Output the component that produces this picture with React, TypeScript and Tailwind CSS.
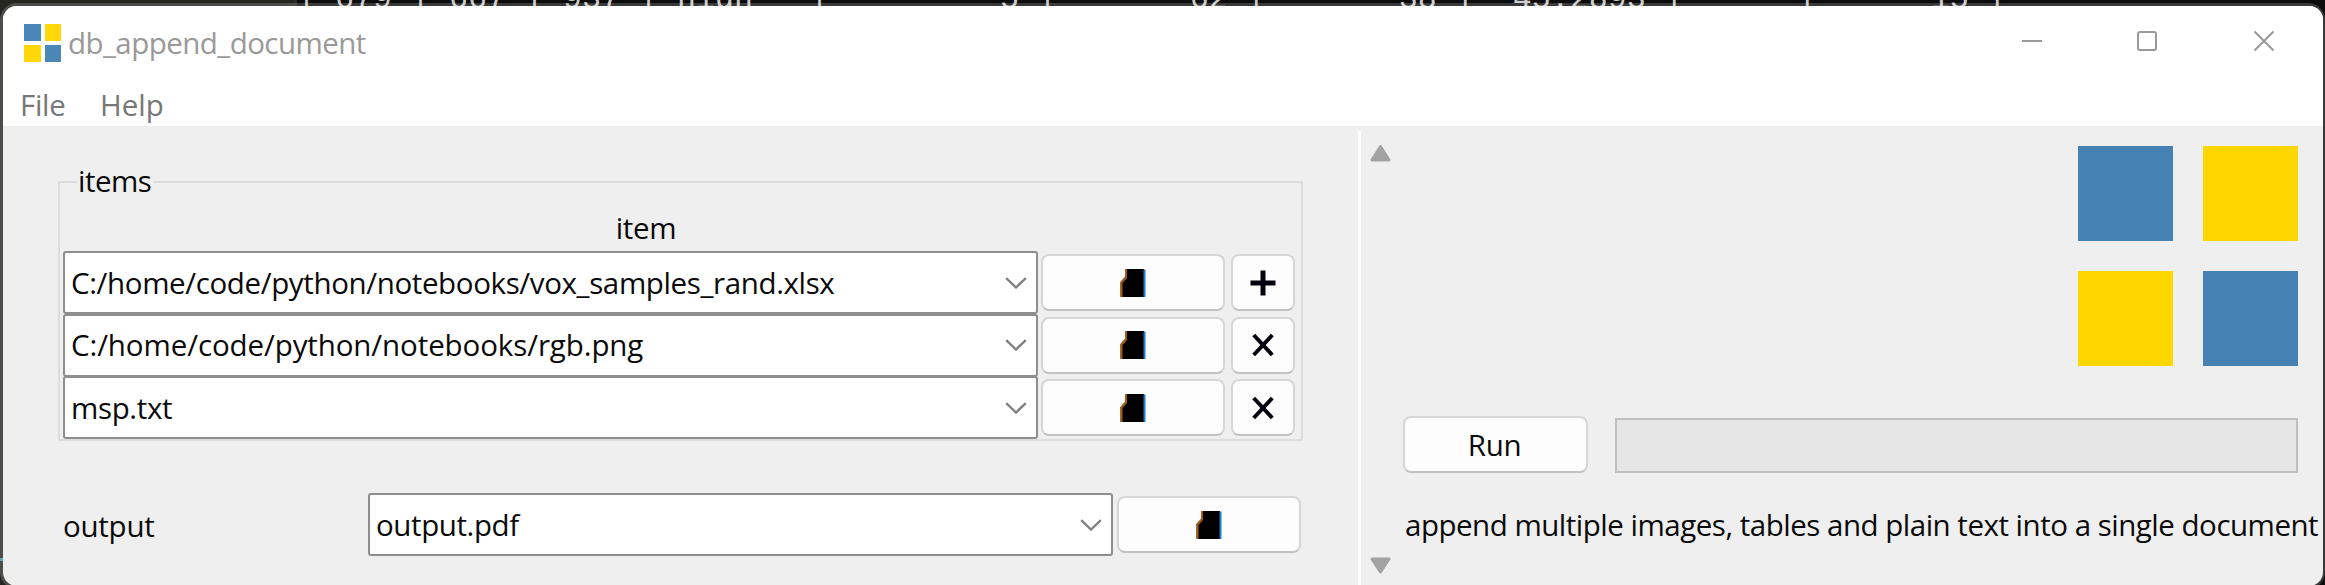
import type { ReactNode } from "react";

function FileIcon() {
  return (
    <svg width="26" height="28" viewBox="0 0 26 28" className="shrink-0">
      <path d="M5 0H24V28H0.500V13L5 8Z" fill="#000" />
      <path d="M5 0H7V9L2.500 14V28H0.500V13L5 8Z" fill="#a85a10" />
      <rect x="23.500" y="0.500" width="2" height="27.500" fill="#1a7fd0" />
    </svg>
  );
}

function Chevron() {
  return (
    <svg width="22" height="12" viewBox="0 0 22 12" className="shrink-0">
      <path d="M1.200 1.200L11 10.500L20.800 1.200" fill="none" stroke="#808080" strokeWidth="2.400" />
    </svg>
  );
}

function Plus() {
  return (
    <svg width="26" height="26" viewBox="0 0 26 26">
      <path d="M0.500 13H25.500M13 0.500V25.500" stroke="#05000c" strokeWidth="5" />
    </svg>
  );
}

function Cross() {
  return (
    <svg width="22" height="24" viewBox="0 0 22 24">
      <path d="M1.700 2L20.300 22M20.300 2L1.700 22" stroke="#05000c" strokeWidth="4" />
    </svg>
  );
}

function Combo({ value, className }: { value: string; className: string }) {
  return (
    <div
      className={
        "flex h-[63px] shrink-0 items-center justify-between rounded-[3px] border-2 border-[#8e8e8e] bg-white pr-[9px] pl-[6px] " +
        className
      }
    >
      <span>{value}</span>
      <Chevron />
    </div>
  );
}

function Button({ className, children }: { className: string; children: ReactNode }) {
  return (
    <div
      className={
        "flex h-[57px] shrink-0 items-center justify-center rounded-[8px] border-2 border-[#d6d6d6] border-b-[#c2c2c2] bg-[#fdfdfd] " +
        className
      }
    >
      {children}
    </div>
  );
}

const items = [
  { path: "C:/home/code/python/notebooks/vox_samples_rand.xlsx", tracking: "tracking-[-0.37px]", action: "add" },
  { path: "C:/home/code/python/notebooks/rgb.png", tracking: "tracking-[-0.1px]", action: "remove" },
  { path: "msp.txt", tracking: "tracking-[-0.35px]", action: "remove" },
];

export default function App() {
  return (
    <div className="relative h-[585px] w-[2325px] overflow-hidden bg-[#0c0c0c] font-['Open_Sans',sans-serif] text-[29.5px] leading-[40px] whitespace-nowrap text-[#0a0a0a]">
      {/* desktop behind the window */}
      <div className="absolute inset-0 flex">
        <div className="h-full w-[294px] bg-[#25261f]" />
        <div className="h-full w-[3px] bg-[#2b2b2b]" />
        <div className="h-[12px] overflow-hidden font-['Liberation_Mono',monospace] text-[31.67px] leading-[36px] text-[#cccccc]">
          <pre className="-mt-[18px] [font-family:inherit]">
            {"| 679 | 667 | 937 | high   |         5 |       62 |       38 |  45.2893 |      |      15 |"}
          </pre>
        </div>
      </div>

      {/* window frame */}
      <div className="absolute top-[3px] left-0 h-[586px] w-[2325px] rounded-[17px] bg-[#ffffff30] pt-[3px] pl-[3px]">
        <div className="flex h-[580px] w-[2320px] flex-col overflow-hidden rounded-[14px] bg-[#efefef]">
          <div className="flex h-[120px] shrink-0 flex-col bg-white">
            <div className="flex h-[72px] items-start">
              <div className="mt-[18px] ml-[21px] grid grid-cols-2 gap-x-[4px] gap-y-[4px]">
                <div className="h-[17px] w-[16.5px] bg-[#4a86b8]" />
                <div className="h-[17px] w-[16.5px] bg-[#ffd70a]" />
                <div className="h-[17px] w-[16.5px] bg-[#ffd70a]" />
                <div className="h-[17px] w-[16.5px] bg-[#4a86b8]" />
              </div>
              <div className="mt-[17px] ml-[7px] tracking-[-0.55px] text-[#999999]">db_append_document</div>
              <svg width="253" height="22" viewBox="0 0 253 22" className="mt-[24px] mr-[48px] ml-auto" fill="none" stroke="#999999" strokeWidth="2">
                <path d="M0 11H20" />
                <rect x="116" y="2" width="18" height="18" rx="2" />
                <path d="M232.500 1.500L251.500 20.500M251.500 1.500L232.500 20.500" />
              </svg>
            </div>
            <div className="flex pt-[7px] pl-[17px] text-[#777777]">
              <span className="w-[80px] tracking-[-0.3px]">File</span>
              <span>Help</span>
            </div>
          </div>

          <div className="flex min-h-0 flex-1">
            {/* form */}
            <div className="w-[1355px] shrink-0">
              <div className="mt-[55px] ml-[55px] h-[260px] w-[1245px] border-2 border-[#dcdcdc]">
                <div className="-mt-[22px] ml-[17px] h-[40px] w-[76px] bg-[#efefef] pl-px tracking-[-0.5px]">items</div>
                <div className="mt-[7px] ml-[2px] w-[1168px] text-center tracking-[-0.3px]">item</div>
                <div className="mt-[3px] ml-[3px] flex flex-col">
                  {items.map((item) => (
                    <div key={item.path} className="flex h-[62.5px] items-start">
                      <Combo value={item.path} className={"w-[975px] " + item.tracking} />
                      <Button className="mt-[3px] ml-[3px] w-[184px]">
                        <FileIcon />
                      </Button>
                      <Button className="mt-[3px] ml-[6px] w-[64px]">
                        {item.action === "add" ? <Plus /> : <Cross />}
                      </Button>
                    </div>
                  ))}
                </div>
              </div>
              <div className="mt-[52px] flex items-center pl-[60px]">
                <span className="w-[305px] pt-[2px] tracking-[-0.25px]">output</span>
                <Combo value="output.pdf" className="w-[745px] tracking-[-0.4px]" />
                <Button className="ml-[4px] w-[184px]">
                  <FileIcon />
                </Button>
              </div>
            </div>

            {/* scroll rail */}
            <div className="mt-[5px] flex w-[36px] shrink-0 flex-col items-center border-l-3 border-white">
              <svg width="21" height="17" viewBox="0 0 21 17" className="mt-[14px] ml-[5px]">
                <path d="M10.500 1.500L19 15H2Z" fill="#a3a3a3" stroke="#a3a3a3" strokeWidth="3" strokeLinejoin="round" />
              </svg>
              <svg width="21" height="17" viewBox="0 0 21 17" className="mt-auto mb-[12px] ml-[5px]">
                <path d="M10.500 15L19 2H2Z" fill="#a3a3a3" stroke="#a3a3a3" strokeWidth="3" strokeLinejoin="round" />
              </svg>
            </div>

            {/* run panel */}
            <div className="flex min-w-0 flex-1 flex-col pl-[9px]">
              <div className="mt-[20px] mr-[25px] grid grid-cols-[95px_95px] gap-[30px] self-end">
                <div className="h-[95px] bg-[#4682b4]" />
                <div className="h-[95px] bg-[#ffd700]" />
                <div className="h-[95px] bg-[#ffd700]" />
                <div className="h-[95px] bg-[#4682b4]" />
              </div>
              <div className="mt-[50px] flex">
                <Button className="w-[185px]">
                  <span className="pr-[2px] tracking-[-0.3px]">Run</span>
                </Button>
                <div className="mt-[2px] ml-[27px] h-[55px] w-[683px] border-2 border-[#bfbfbf] bg-[#e6e6e6]" />
              </div>
              <div className="mt-[32px] pl-[2px] tracking-[-0.49px]">
                append multiple images, tables and plain text into a single document
              </div>
            </div>
          </div>
        </div>
      </div>
      <div className="absolute top-[558px] left-0 h-[3px] w-[3px] bg-[#5aa7b5]" />
    </div>
  );
}
